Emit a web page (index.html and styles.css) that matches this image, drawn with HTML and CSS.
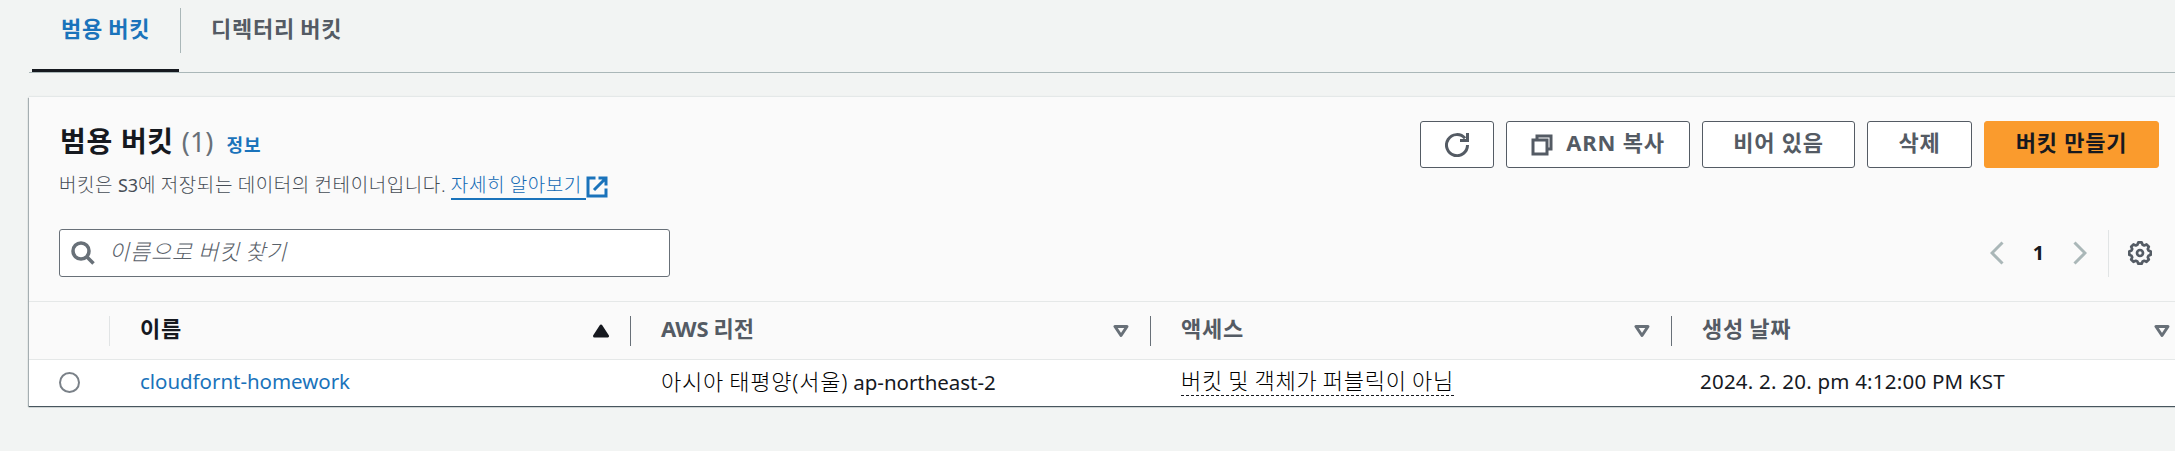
FILE: index.html
```html
<!DOCTYPE html>
<html lang="ko">
<head>
<meta charset="utf-8">
<title>S3 버킷</title>
<link rel="stylesheet" href="styles.css">
</head>
<body>
<nav class="tabs">
  <a class="tab tab-active"><span>범용 버킷</span></a>
  <a class="tab"><span>디렉터리 버킷</span></a>
</nav>
<main class="panel">
  <header class="panel-head">
    <div class="heading">
      <h2 class="title">범용 버킷 <span class="count">(1)</span><a class="info">정보</a></h2>
      <p class="desc">버킷은 <span class="latin">S3</span>에 저장되는 데이터의 컨테이너입니다. <a class="more">자세히 알아보기</a><svg class="ext" viewBox="0 0 22 22"><path d="M9.500 2H2v18h18v-7.500M12.500 2H20v7.500M20 2L8 14"/></svg></p>
    </div>
    <div class="actions">
      <button class="btn btn-refresh"><svg viewBox="0 0 24 24"><path d="M22.500 12A10.500 10.500 0 1 1 20 5.300"/><path d="M22.500 0V7.500H15"/></svg></button>
      <button class="btn btn-arn"><svg viewBox="0 0 22 22"><path d="M6 6V2h14v13h-4"/><path d="M2 6h14v14H2z"/></svg><span>ARN 복사</span></button>
      <button class="btn btn-empty">비어 있음</button>
      <button class="btn btn-delete">삭제</button>
      <button class="btn btn-create">버킷 만들기</button>
    </div>
  </header>
  <div class="tools">
    <label class="search"><svg viewBox="0 0 24 24"><circle cx="10" cy="10" r="8"/><path d="M15.500 15.500L22.500 22.500"/></svg><span>이름으로 버킷 찾기</span></label>
    <div class="pager">
      <svg class="chev" viewBox="0 0 14 24"><path d="M12.500 1.500L2 12l10.500 10.500"/></svg>
      <b class="page">1</b>
      <svg class="chev chev-next" viewBox="0 0 14 24"><path d="M1.500 1.500L12 12L1.500 22.500"/></svg>
      <span class="rule"></span>
      <svg class="gear" viewBox="0 0 24 24"><path d="M10.300 1.400h3.400l.9 2.300 1.600.7 2.300-1 2.300 2.300-1 2.300.7 1.500 2.200.9v3.400l-2.200.9-.7 1.500 1 2.300-2.300 2.300-2.300-1-1.600.7-.9 2.200h-3.400l-.9-2.200-1.600-.7-2.300 1-2.300-2.300 1-2.300-.7-1.500-2.200-.9v-3.400l2.200-.9.7-1.500-1-2.300 2.300-2.300 2.300 1 1.600-.7z"/><circle cx="12" cy="12" r="3"/></svg>
    </div>
  </div>
  <div class="grid grid-head">
    <div class="cell cell-pick"></div>
    <div class="cell sorted"><span>이름</span><svg class="sort" viewBox="0 0 16 14"><path d="M8 2L14.500 12H1.500z"/></svg></div>
    <div class="cell"><span class="aws">AWS 리전</span><svg class="sort" viewBox="0 0 16 14"><path d="M2 2.500h12L8 11.500z"/></svg></div>
    <div class="cell"><span>액세스</span><svg class="sort" viewBox="0 0 16 14"><path d="M2 2.500h12L8 11.500z"/></svg></div>
    <div class="cell"><span>생성 날짜</span><svg class="sort" viewBox="0 0 16 14"><path d="M2 2.500h12L8 11.500z"/></svg></div>
  </div>
  <div class="grid grid-row">
    <div class="cell cell-pick"><span class="radio"></span></div>
    <div class="cell"><a class="latin name">cloudfornt-homework</a></div>
    <div class="cell"><span class="place">아시아 태평양(서울)<span class="latin region"> ap-northeast-2</span></span></div>
    <div class="cell"><span class="access">버킷 및 객체가 퍼블릭이 아님</span></div>
    <div class="cell"><span class="latin date">2024. 2. 20. pm 4:12:00 PM KST</span></div>
  </div>
</main>
</body>
</html>
```
FILE: styles.css
```css
* { box-sizing: border-box; }
body {
  margin: 0;
  height: 451px;
  overflow: hidden;
  background: #f2f4f3;
  color: #16191f;
  font-family: "Noto Sans", "Noto Sans CJK KR", sans-serif;
  font-size: 22px;
  letter-spacing: .76px;
  word-spacing: -1.2px;
}
svg { fill: none; stroke: currentColor; flex: none; }
.latin { font-size: 20.5px; font-weight: 400; letter-spacing: -.04px; word-spacing: 0; }

/* Tabs */
.tabs {
  display: flex;
  height: 73px;
  margin-left: 29px;
  padding-left: 3px;
  border-bottom: 1px solid #aab7b8;
}
.tab {
  display: flex;
  height: 72px;
  padding-top: 8px;
  color: #545b64;
  font-weight: 700;
  line-height: 40px;
  white-space: nowrap;
}
.tab span { height: 45px; padding: 0 30px; }
.tab-active {
  width: 149px;
  background: linear-gradient(#16191f, #16191f) 0 100% / 147px 3px no-repeat;
  color: #1a73bb;
}
.tab-active span { width: 149px; padding-left: 29px; border-right: 1px solid #aab7b8; }

/* Panel */
.panel {
  width: 2163px;
  margin: 24px 0 0 29px;
  background: #fafafa;
  box-shadow: 0 -1px 1px #e4e8e8, -1px 1px 1px rgba(0, 28, 36, .3), 0 1px 1px #687078;
}
.panel-head { display: flex; justify-content: space-between; height: 132px; padding: 24px 33px 0 30px; }
.title {
  display: flex;
  align-items: baseline;
  height: 44px;
  margin: 0;
  padding: 3px 0 0 1px;
  font-size: 28px;
  line-height: 34px;
  letter-spacing: .7px;
  word-spacing: 0;
  white-space: pre;
}
.count { color: #687078; font-size: 27px; font-weight: 400; letter-spacing: 0; }
.info { margin-left: 13px; color: #1a73bb; font-size: 18px; letter-spacing: 1px; }
.desc {
  display: flex;
  align-items: baseline;
  margin: 0;
  color: #464d56;
  font-size: 19px;
  font-weight: 300;
  line-height: 41px;
  letter-spacing: .57px;
  word-spacing: -.8px;
  white-space: pre;
}
.desc .latin { font-size: 18px; }
.more { height: 35px; padding-right: 4px; border-bottom: 2px solid #1a73bb; color: #1068b4; }
.ext { width: 22px; height: 22px; color: #1a73bb; stroke-width: 3; align-self: flex-start; margin-top: 11px; }
.actions { display: flex; gap: 12px; }
.btn {
  display: flex;
  align-items: center;
  justify-content: center;
  gap: 13px;
  height: 47px;
  padding: 0 0 8px;
  border: 1px solid #545b64;
  border-radius: 3px;
  background: #fff;
  color: #545b64;
  font: inherit;
  font-weight: 700;
  letter-spacing: .76px;
  white-space: nowrap;
}
.btn svg { position: relative; top: 4px; width: 22px; height: 22px; stroke-width: 3; }
.btn-refresh { width: 74px; }
.btn-refresh svg { width: 24px; height: 24px; }
.btn-arn { width: 184px; }
.btn-empty { width: 153px; }
.btn-delete { width: 105px; }
.btn-create { width: 175px; border-color: #fa9b2d; background: #fa9b2d; color: #16191f; }

/* Filter and pagination */
.tools { display: flex; justify-content: space-between; height: 72px; padding: 0 40px 0 30px; }
.search {
  display: flex;
  align-items: center;
  gap: 14px;
  width: 611px;
  height: 48px;
  padding-left: 11px;
  border: 1px solid #687078;
  border-radius: 3px;
  background: #fff;
  color: #687078;
  font-style: italic;
  font-weight: 300;
}
.search span { padding-bottom: 6px; letter-spacing: .7px; color: #59616a; }
.search svg { width: 24px; height: 24px; stroke-width: 3.500; }
.pager { display: flex; align-items: center; height: 48px; }
.chev { width: 14px; height: 24px; color: #aab7b8; stroke-width: 3; }
.page { width: 69px; padding-bottom: 1px; text-align: center; font-size: 20px; letter-spacing: 0; }
.rule { width: 1px; height: 47px; margin: 0 19px 0 21px; background: #e1e4e5; }
.gear { width: 24px; height: 24px; color: #545b64; stroke-width: 2.700; stroke-linejoin: round; }

/* Table */
.grid { display: grid; grid-template-columns: 81px 521px 520px 521px 520px; border-top: 1px solid #e5e8e8; }
.cell { display: flex; align-items: center; padding-left: 30px; white-space: nowrap; }
.grid-head { height: 58px; align-items: center; }
.grid-head .cell { height: 30px; justify-content: space-between; padding-right: 21px; border-right: 1px solid #687078; color: #545b64; font-weight: 700; }
.grid-head .cell-pick { border-right-color: #e1e4e5; }
.grid-head .sorted { color: #16191f; }
.grid-head span { padding-bottom: 8px; }
.grid-head .aws { letter-spacing: 0; word-spacing: -1px; }
.sort { width: 16px; height: 14px; stroke-width: 3; stroke-linejoin: round; color: #687078; }
.sorted .sort { color: #16191f; fill: currentColor; }
.grid-row { height: 47px; background: #fff; }
.grid-row .cell { padding-bottom: 5px; font-weight: 300; }
.radio { width: 21px; height: 21px; margin-top: 4px; border: 2px solid #7a8188; border-radius: 50%; }
.name { padding-top: 1px; color: #1a73bb; }
.place { padding-bottom: 2px; color: #000; }
.region { color: #16191f; }
.access { color: #000; line-height: 29px; border-bottom: 1px dashed #16191f; }
.date { margin-left: -2px; padding-top: 1px; letter-spacing: .22px; }
```
